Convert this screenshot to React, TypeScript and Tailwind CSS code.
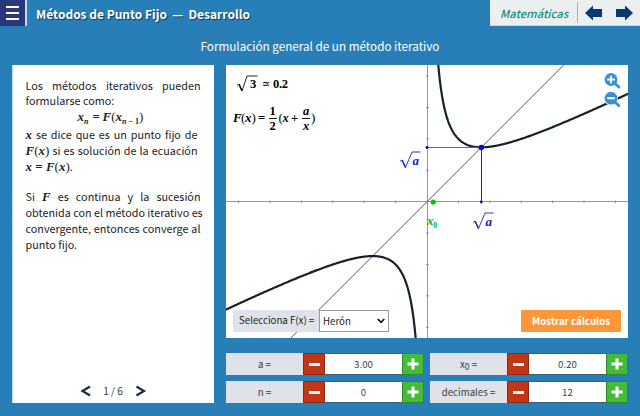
import React from 'react';

const SERIF = "font-['Liberation_Serif','Times_New_Roman',serif]";
const UNIT = 31.4;
const OX = 201;
const OY = 136.7;

function curve(from: number, to: number) {
  const pts: string[] = [];
  for (let i = 0; i <= 300; i++) {
    const x = from + ((to - from) * i) / 300;
    const y = (x + 3 / x) / 2;
    pts.push(`${(OX + x * UNIT).toFixed(2)},${(OY - y * UNIT).toFixed(2)}`);
  }
  return pts.join(' ');
}

function Line({ children, w = 'w-[175px]', justify = true }: { children: React.ReactNode; w?: string; justify?: boolean }) {
  return (
    <p className={`h-[15.8px] whitespace-nowrap leading-[15.8px] ${w} ${justify ? '[text-align-last:justify]' : ''}`}>{children}</p>
  );
}

function M({ children }: { children: React.ReactNode }) {
  return <span className={`${SERIF} text-[13px] font-bold italic leading-none`}>{children}</span>;
}

function Up({ children }: { children: React.ReactNode }) {
  return <span className="font-normal not-italic">{children}</span>;
}

function Spinner({ label, value }: { label: React.ReactNode; value: string }) {
  return (
    <div className="flex h-[22px] w-[198px] text-[9.7px] leading-[22px] text-[#3a3f46]">
      <div className="w-[77px] whitespace-nowrap bg-[#dfe2e8] text-center">{label}</div>
      <button className="flex w-[22px] items-center justify-center border border-[#8f2a12] bg-[#c03617]">
        <span className="h-[3px] w-[11px] bg-white" />
      </button>
      <div className="flex-1 border-y border-[#3c6078] bg-white text-center leading-[21px]">{value}</div>
      <button className="flex w-[22px] items-center justify-center border border-[#2d8a2b] bg-[#45bb36]">
        <svg width="12" height="12" viewBox="0 0 12 12">
          <path d="M6 .5V11.5M.5 6H11.5" stroke="#fff" strokeWidth="3" />
        </svg>
      </button>
    </div>
  );
}

function Magnifier({ x, y, plus }: { x: number; y: number; plus?: boolean }) {
  return (
    <g transform={`translate(${x} ${y})`} fill="none">
      <path d="M3.5 3.5L9 8.5" stroke="#fff" strokeWidth="5" />
      <circle r="7" fill="#fff" />
      <path d="M3.5 3.5L8.7 8.2" stroke="#3493d6" strokeWidth="2.8" />
      <circle r="6.4" fill="#3493d6" />
      <path d={plus ? 'M-3.8 0H3.8M0 -3.8V3.8' : 'M-3.8 0H3.8'} stroke="#fff" strokeWidth="2" />
    </g>
  );
}

function Plot() {
  const ticks = [-6, -5, -4, -3, -2, -1, 1, 2, 3, 4, 5, 6];
  const s = Math.sqrt(3) * UNIT;
  return (
    <svg width="402" height="273" viewBox="0 0 402 273" className={`block ${SERIF}`}>
      <path d="M0 136.5H402M201.5 0V273" stroke="#8b9da2" strokeWidth="1" />
      {ticks.map((t) => (
        <g key={t} stroke="#7f8e94" strokeWidth="1">
          <path d={`M${OX + t * UNIT} 135.5v2.5`} />
          {Math.abs(t) < 5 && <path d={`M200 ${OY - t * UNIT}h2.5`} />}
        </g>
      ))}
      <path d="M64.7 273L337.7 0" stroke="#444" strokeWidth=".9" />
      <polyline points={curve(0.3, 6.5)} fill="none" stroke="#14222c" strokeWidth="2.2" />
      <polyline points={curve(-6.5, -0.3)} fill="none" stroke="#14222c" strokeWidth="2.2" />
      <path d={`M201 82.5H${OX + s}`} stroke="#5a5ad2" strokeWidth="1" />
      <path d="M255.5 82.5V136.5" stroke="#2020b4" strokeWidth="1" />
      <circle cx="255.3" cy="82.5" r="2.7" fill="#00f" />
      <circle cx="201" cy="82.5" r="1.4" fill="#00c" />
      <circle cx="255.3" cy="137" r="1.4" fill="#00c" />
      <circle cx="207.2" cy="137" r="2.6" fill="#00c400" />

      <g fill="#000" fontWeight="bold" fontSize="12.5">
        <path d="M11 20.5L13 19L16 26L21 11H31.5" fill="none" stroke="#111" strokeWidth=".9" />
        <path d="M13 19L16 26" stroke="#111" strokeWidth="1.5" />
        <text x="24" y="23">3</text>
        <text x="36" y="23" fontWeight="normal" textLength="8" lengthAdjust="spacingAndGlyphs">≃</text>
        <text x="47" y="23" textLength="15">0.2</text>
        <text x="7" y="57" fontSize="13" fontStyle="italic">F</text>
        <text x="15" y="57" fontSize="13" fontWeight="normal">(</text>
        <text x="19" y="57" fontSize="13" fontStyle="italic">x</text>
        <text x="25.5" y="57" fontSize="13" fontWeight="normal">)</text>
        <text x="32" y="57">=</text>
        <text x="43.5" y="50">1</text>
        <path d="M43 53.5h8M76 53.5h8" stroke="#111" strokeWidth="1" />
        <text x="43.5" y="65">2</text>
        <text x="52.5" y="57" fontWeight="normal" fontSize="13">(</text>
        <text x="56.5" y="57" fontStyle="italic">x</text>
        <text x="65" y="57">+</text>
        <text x="77" y="50" fontStyle="italic">a</text>
        <text x="77" y="65" fontStyle="italic">x</text>
        <text x="85" y="57" fontWeight="normal" fontSize="13">)</text>
      </g>
      {[[174, 86.5], [247, 147.5]].map(([x, y]) => (
        <g key={x} transform={`translate(${x} ${y})`}>
          <path d="M0 10L2 8.5L5.5 16L12 0.5H20.5" fill="none" stroke="#2020cf" strokeWidth=".9" />
          <path d="M2 8.5L5.5 16" stroke="#2020cf" strokeWidth="1.5" />
          <text x="12.5" y="13" fontSize="13" fontWeight="bold" fontStyle="italic" fill="#1515cc">a</text>
        </g>
      ))}
      <text x="201" y="160" fontSize="13" fontWeight="bold" fontStyle="italic" fill="#00b800">x</text>
      <text x="207.3" y="162.5" fontSize="8" fontWeight="bold" fill="#00b800">0</text>
      <Magnifier x={385} y={14.5} plus />
      <Magnifier x={385} y={33.2} />
    </svg>
  );
}

export default function App() {
  return (
    <div className="flex h-[416px] w-[640px] flex-col overflow-hidden bg-[#287fb8] font-['Noto_Sans_CJK_SC','Noto_Sans',sans-serif]">
      <header className="flex h-[26px] items-start">
        <button className="flex h-[26px] w-[27px] flex-col items-center justify-center gap-[4px] border-r-2 border-[#c8d9e8] bg-[#29387b] pb-[1px]">
          <span className="h-[2px] w-[13px] bg-white" />
          <span className="h-[2px] w-[13px] bg-white" />
          <span className="h-[2px] w-[13px] bg-white" />
        </button>
        <h1 className="ml-[9px] flex w-[214px] justify-between whitespace-nowrap text-[12px] font-bold leading-[28px] text-white [text-shadow:1px_1px_1px_#123a5c]">
          <span>Métodos de Punto Fijo</span>
          <span>—</span>
          <span>Desarrollo</span>
        </h1>
        <div className="ml-auto flex h-[26px] w-[150px] items-center border-b border-[#c6d8df] bg-[#eceff0]">
          <span className="ml-[10px] w-[77px] whitespace-nowrap text-[11.2px] font-medium italic leading-[26px] text-[#15917f]">Matemáticas</span>
          <span className="h-[21px] w-px bg-[#8eb1e3]" />
          <svg width="62" height="24" viewBox="0 0 62 24" fill="#083872">
            <path d="M7 12L15 4.5v3.5h9v8h-9v3.5z" />
            <path d="M55 12L47 4.5v3.5h-9v8h9v3.5z" />
          </svg>
        </div>
      </header>
      <h2 className="h-[39px] whitespace-nowrap text-center text-[11.7px] leading-[39px] text-white">Formulación general de un método iterativo</h2>
      <main className="flex pl-[12px]">
        <section className="flex h-[338px] w-[202px] flex-col border-l border-[#c1d9e8] bg-white pl-[12.5px] pt-[12.5px] text-[10.8px] text-[#222]">
          <Line>Los métodos iterativos pueden</Line>
          <Line justify={false}>formularse como:</Line>
          <div className="flex h-[18px] pl-[52px] pt-px leading-[16px]">
            <M>
              <span className="inline-block w-[15px]">x<span className="relative top-[3px] text-[8px]">n</span></span>
              <span className="inline-block w-[10px] not-italic">=</span>
              <span>F<Up>(</Up>x</span>
              <span className="relative top-[3px] text-[8px]">n<span className="not-italic"> − 1</span></span>
              <Up>)</Up>
            </M>
          </div>
          <Line w="w-[172px]"><M>x</M> se dice que es un punto fijo de</Line>
          <Line w="w-[172px]"><M>F<Up>(</Up>x<Up>)</Up></M> si es solución de la ecuación</Line>
          <Line justify={false}><M>x <span className="not-italic">=</span> F<Up>(</Up>x<Up>)</Up></M>.</Line>
          <div className="h-[15px]" />
          <Line>Si <M>F</M> es continua y la sucesión</Line>
          <Line>obtenida con el método iterativo es</Line>
          <Line>convergente, entonces converge al</Line>
          <Line justify={false}>punto fijo.</Line>
          <div className="mb-[4px] mt-auto flex h-[16px] items-center pl-[54px] text-[10px] text-[#333c48]">
            <svg width="12" height="12" viewBox="0 0 12 12"><path d="M10 1.5L2.5 6L10 10.5" fill="none" stroke="#1c2e44" strokeWidth="2.2" /></svg>
            <span className="w-[43px] whitespace-nowrap text-center leading-[16px]">1 / 6</span>
            <svg width="12" height="12" viewBox="0 0 12 12"><path d="M1.5 1.5L9 6L1.5 10.5" fill="none" stroke="#1c2e44" strokeWidth="2.2" /></svg>
          </div>
        </section>
        <section className="ml-[12px] w-[402px]">
          <div className="relative h-[273px] bg-white">
            <Plot />
            <div className="absolute left-[7px] top-[245px] flex h-[22px] w-[156px] text-[9.7px] leading-[21px] text-[#222]">
              <span className="w-[86px] whitespace-nowrap bg-[#dfe2e8] pl-[6px]">Selecciona F(x) =</span>
              <button className="flex flex-1 items-center justify-between border border-[#999] bg-white pl-[3px] pr-[3px] text-left leading-[20px]">
                Herón
                <svg width="8" height="6" viewBox="0 0 8 6"><path d="M.7 1L4 4.4L7.3 1" fill="none" stroke="#111" strokeWidth="1.7" /></svg>
              </button>
            </div>
            <button className="absolute left-[295px] top-[245px] h-[22px] w-[100px] whitespace-nowrap rounded-[1px] bg-[#fb9738] text-center text-[9.7px] font-bold leading-[21px] text-white">Mostrar cálculos</button>
          </div>
          <div className="grid grid-cols-[198px_198px] gap-x-[6px] gap-y-[6px] pt-[15px]">
            <Spinner label="a =" value="3.00" />
            <Spinner label={<>x<span className="relative top-[2px] text-[8.5px]">0</span> =</>} value="0.20" />
            <Spinner label="n =" value="0" />
            <Spinner label="decimales =" value="12" />
          </div>
        </section>
      </main>
    </div>
  );
}
